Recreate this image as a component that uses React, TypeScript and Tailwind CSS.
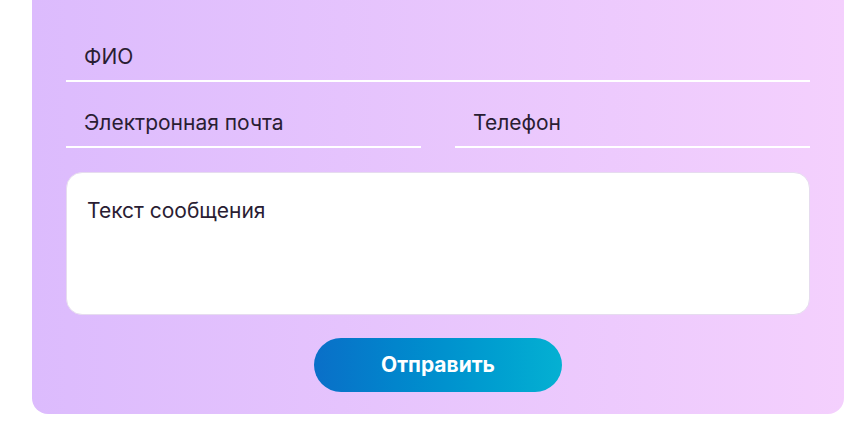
import React from 'react'

export default function App() {
  return (
    <div className="w-[856px] h-[430px] bg-white font-['Inter',sans-serif] text-[#2a1d33]">
      <div className="ml-[32px] w-[812px] h-[414px] rounded-b-2xl bg-gradient-to-r from-[#dcbbfd] to-[#f4d0fd] px-[34px] pt-[34px] pb-[22px] flex flex-col">
        <div className="h-[48px] border-b-2 border-white flex items-center pl-[18px] text-[21px]">
          ФИО
        </div>
        <div className="mt-[18px] grid grid-cols-2 gap-[34px]">
          <div className="h-[48px] border-b-2 border-white flex items-center pl-[18px] text-[21px]">
            Электронная почта
          </div>
          <div className="h-[48px] border-b-2 border-white flex items-center pl-[18px] text-[21px]">
            Телефон
          </div>
        </div>
        <div className="mt-[24px] h-[143px] rounded-2xl bg-white border border-[#e6dcef] pl-[20px] pt-[25px] text-[21px] leading-tight">
          Текст сообщения
        </div>
        <div className="mt-[23px] flex justify-center">
          <button className="w-[248px] h-[54px] rounded-full bg-gradient-to-r from-[#0a6fc8] to-[#05b0d2] text-white font-bold text-[21px]">
            Отправить
          </button>
        </div>
      </div>
    </div>
  )
}
